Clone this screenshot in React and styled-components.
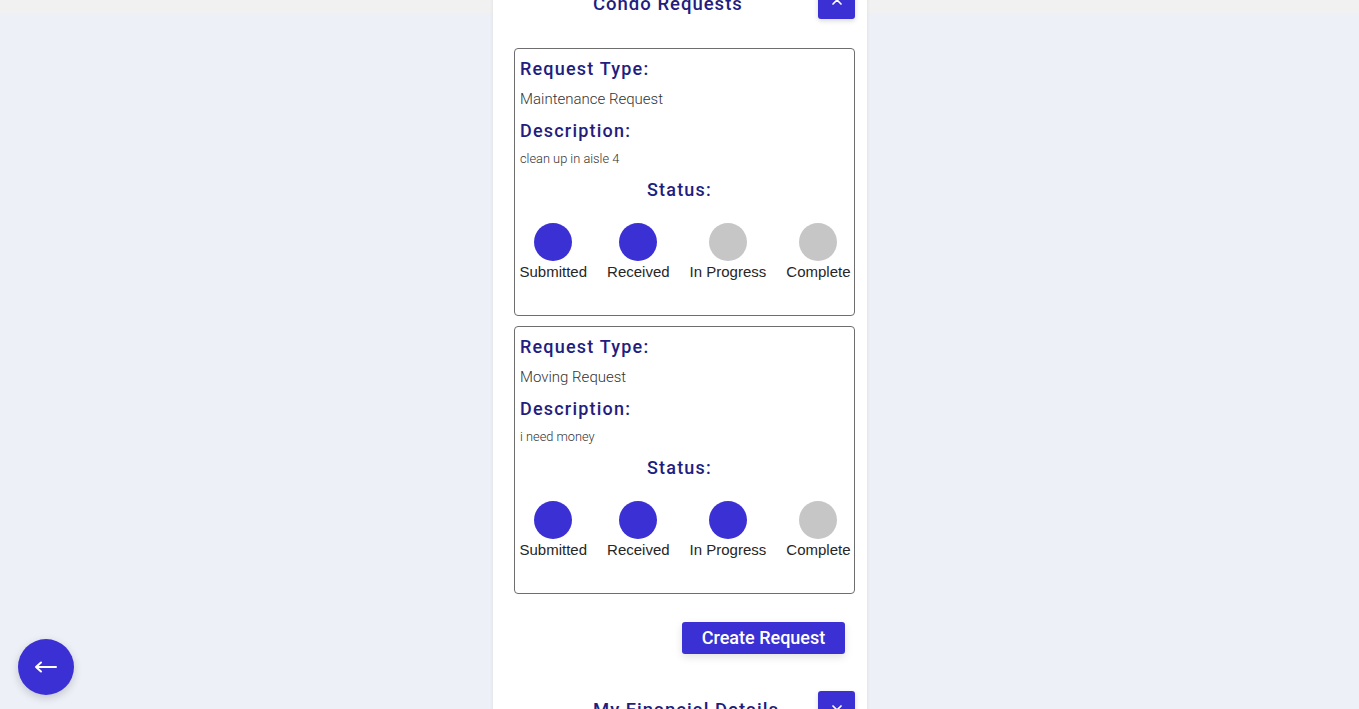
import React from "react";
import styled, { createGlobalStyle } from "styled-components";
import { ChevronUp, ChevronDown } from "lucide-react";

const Global = createGlobalStyle`
  html, body { margin: 0; padding: 0; height: 100%; overflow: hidden; }
  body {
    font-family: Roboto, "Noto Sans", sans-serif;
    background: linear-gradient(#f1f1f2 0, #f1f1f2 13px, #edf0f7 13px, #edf0f7 100%);
  }
`;

const BLUE = "#3a30d4";
const NAVY = "#221d7e";

const Page = styled.div`
  display: flex;
  justify-content: center;
  padding-left: 1px;
`;

const Panel = styled.main`
  width: 374px;
  background: #fff;
  box-shadow: 0 0 4px rgba(0, 0, 0, 0.08);
  margin-top: -15px;
  box-sizing: border-box;
  padding: 0 12px 0 21px;
  min-height: 760px;
`;

const Section = styled.section`
  padding-bottom: 37px;
`;

const Header = styled.header`
  display: flex;
  align-items: center;
  height: 34px;
  margin-bottom: ${(p) => p.$gap || 0}px;
`;

const Title = styled.h2`
  flex: 1;
  margin: 0;
  padding: 3px 0 0 79px;
  text-align: left;
  font-size: 18.5px;
  font-weight: 500;
  letter-spacing: 1px;
  color: ${NAVY};
  white-space: nowrap;
`;

const ToggleButton = styled.button`
  width: 37px;
  height: 34px;
  border: none;
  border-radius: 3px;
  background: ${BLUE};
  color: #fff;
  display: flex;
  align-items: center;
  justify-content: center;
  padding: 0;
  box-shadow: 0 2px 5px rgba(0, 0, 0, 0.15);
`;

const CardList = styled.div`
  display: flex;
  flex-direction: column;
  gap: 10px;
`;

const Card = styled.article`
  border: 1px solid #6e6e6e;
  border-radius: 4px;
  padding: 8px 5px 34px;
`;

const Label = styled.h3`
  margin: ${(p) => p.$mt || 0}px 0 0;
  font-size: 18px;
  line-height: 24px;
  font-weight: 500;
  letter-spacing: 1.2px;
  color: ${NAVY};
  text-align: ${(p) => (p.$center ? "center" : "left")};
  padding-right: ${(p) => (p.$center ? 10 : 0)}px;
`;

const Value = styled.p`
  margin: 8px 0 0;
  font-size: ${(p) => (p.$small ? 12.8 : 15)}px;
  line-height: ${(p) => (p.$small ? 16 : 20)}px;
  font-weight: 300;
  color: #333;
`;

const StatusRow = styled.div`
  display: flex;
  justify-content: center;
  gap: 20px;
  margin-top: 21px;
  padding-left: 1px;
`;

const Step = styled.div`
  display: flex;
  flex-direction: column;
  align-items: center;
`;

const Dot = styled.span`
  width: 38px;
  height: 38px;
  border-radius: 50%;
  background: ${(p) => (p.$on ? BLUE : "#c6c6c6")};
`;

const StepLabel = styled.span`
  margin-top: 2px;
  font-family: "Liberation Sans", Arial, sans-serif;
  font-size: 15px;
  line-height: 18px;
  color: #262626;
  white-space: nowrap;
`;

const Actions = styled.div`
  display: flex;
  justify-content: flex-end;
  margin-top: 28px;
  padding-right: 10px;
`;

const PrimaryButton = styled.button`
  width: 163px;
  height: 32px;
  border: none;
  border-radius: 3px;
  background: ${BLUE};
  color: #fff;
  font-family: Roboto, sans-serif;
  font-size: 18px;
  font-weight: 500;
  padding: 0 0 2px;
  box-shadow: 0 3px 8px rgba(0, 0, 0, 0.12);
`;

const Fab = styled.button`
  position: fixed;
  left: 18px;
  bottom: 14px;
  width: 56px;
  height: 56px;
  border-radius: 50%;
  border: none;
  background: ${BLUE};
  color: #fff;
  display: flex;
  align-items: center;
  justify-content: center;
  padding: 0;
  box-shadow: 0 3px 8px rgba(0, 0, 0, 0.18);
`;

const STEPS = ["Submitted", "Received", "In Progress", "Complete"];

const requests = [
  { type: "Maintenance Request", desc: "clean up in aisle 4", done: 2 },
  { type: "Moving Request", desc: "i need money", done: 3 },
];

function RequestCard({ r }) {
  return (
    <Card>
      <Label>Request Type:</Label>
      <Value>{r.type}</Value>
      <Label $mt={10}>Description:</Label>
      <Value $small>{r.desc}</Value>
      <Label $mt={11} $center>Status:</Label>
      <StatusRow>
        {STEPS.map((s, i) => (
          <Step key={s}>
            <Dot $on={i < r.done} />
            <StepLabel>{s}</StepLabel>
          </Step>
        ))}
      </StatusRow>
    </Card>
  );
}

export default function App() {
  return (
    <>
      <Global />
      <Page>
        <Panel>
          <Section>
            <Header $gap={29}>
              <Title>Condo Requests</Title>
              <ToggleButton aria-label="collapse">
                <ChevronUp size={16} strokeWidth={2.5} />
              </ToggleButton>
            </Header>
            <CardList>
              {requests.map((r) => (
                <RequestCard key={r.type} r={r} />
              ))}
            </CardList>
            <Actions>
              <PrimaryButton>Create Request</PrimaryButton>
            </Actions>
          </Section>
          <Section>
            <Header>
              <Title>My Financial Details</Title>
              <ToggleButton aria-label="expand">
                <ChevronDown size={16} strokeWidth={2.5} />
              </ToggleButton>
            </Header>
          </Section>
        </Panel>
      </Page>
      <Fab aria-label="back">
        <svg width="24" height="24" viewBox="0 0 24 24" fill="none" stroke="currentColor" strokeWidth="2" strokeLinecap="round" strokeLinejoin="round">
          <path d="M2 12h20M2 12l5-4.5M2 12l5 4.5" />
        </svg>
      </Fab>
    </>
  );
}
